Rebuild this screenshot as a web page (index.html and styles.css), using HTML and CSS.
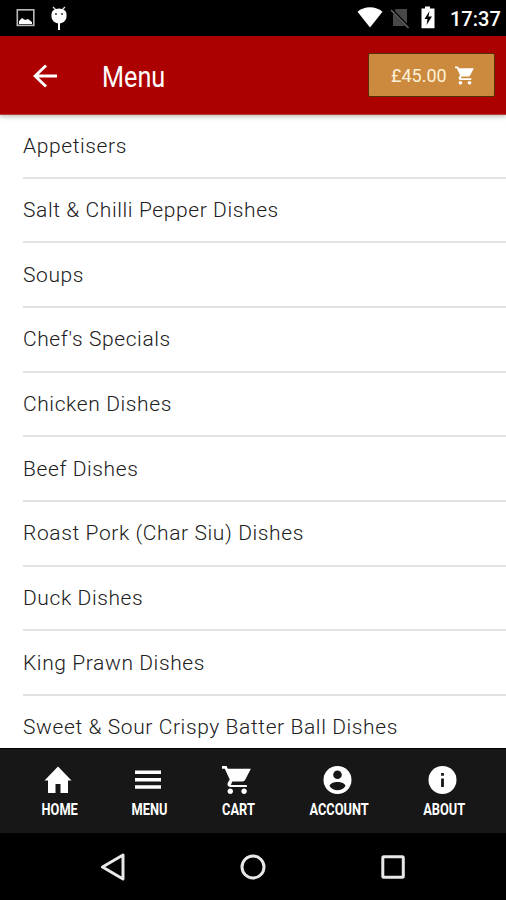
FILE: index.html
```html
<!DOCTYPE html>
<html lang="en">
<head>
<meta charset="utf-8">
<title>Menu</title>
<link rel="stylesheet" href="styles.css">
</head>
<body>
<div class="phone">
  <div class="status">
    <svg class="status-left" width="60" height="36" viewBox="0 0 60 36">
      <rect x="1.3" y="9.8" width="16.5" height="15.6" fill="none" stroke="#bbb" stroke-width="1.6"/>
      <path d="M3 24v-3l3-3 3 2 3-1 4 3v2z" fill="#fff"/>
      <path d="M37 7l3 3M49 7l-3 3" stroke="#ddd" stroke-width="1.4"/>
      <path d="M35.500 14a7.500 5.500 0 0 1 15 0v3a7.500 6.500 0 0 1-15 0z" fill="#fff"/>
      <path d="M43 22v8" stroke="#fff" stroke-width="2"/>
      <circle cx="40" cy="14" r="1.100" fill="#444"/><circle cx="46" cy="14" r="1.100" fill="#444"/>
    </svg>
    <svg class="status-right" width="84" height="36" viewBox="0 0 84 36">
      <path d="M0.500 11.800C7 5.700 19 5.700 25.500 11.800L13 27.400z" fill="#fff"/>
      <path d="M39 9h11v17H36V12z" fill="#484848"/>
      <path d="M34 9l18 19" stroke="#000" stroke-width="3"/>
      <path d="M34 10l17.500 18" stroke="#666" stroke-width="1.500"/>
      <path d="M64.500 8.500h3.500V6.500h5v2h4.500v19.800h-13z" fill="#fff"/>
      <path d="M72.500 11l-5 8h3l-1 6 5.500-8.500h-3.500z" fill="#000"/>
    </svg>
    <span class="clock">17:37</span>
  </div>
  <header class="appbar">
    <svg class="back" width="24" height="24" viewBox="0 0 24 24"><path d="M13 1.500L2 12l11 10.500M2.500 12H24" fill="none" stroke="#fff" stroke-width="2.900"/></svg>
    <h1 class="title"><span>Menu</span></h1>
    <div class="basket">
      <span class="price">£45.00</span>
      <svg width="19" height="19" viewBox="1 2 21 20"><path fill="#fff" d="M7 18c-1.100 0-2 .9-2 2s.9 2 2 2 2-.9 2-2-.9-2-2-2zM1 2v2h2l3.600 7.600-1.400 2.400C4.500 15.400 5.500 17 7 17h12v-2H7.400l1.100-2h7.500c.7 0 1.400-.4 1.700-1L21.900 4H5.200l-.9-2H1zm16 16c-1.100 0-2 .9-2 2s.9 2 2 2 2-.9 2-2-.9-2-2-2z"/></svg>
    </div>
  </header>
  <ul class="list">
    <li><span class="s1">Appetisers</span></li>
    <li><span class="s2">Salt &amp; Chilli Pepper Dishes</span></li>
    <li><span class="s3">Soups</span></li>
    <li><span class="s4">Chef's Specials</span></li>
    <li><span class="s5">Chicken Dishes</span></li>
    <li><span class="s6">Beef Dishes</span></li>
    <li><span class="s7">Roast Pork (Char Siu) Dishes</span></li>
    <li><span class="s8">Duck Dishes</span></li>
    <li><span class="s9">King Prawn Dishes</span></li>
    <li><span class="s10">Sweet &amp; Sour Crispy Batter Ball Dishes</span></li>
  </ul>
  <nav class="tabs">
    <div class="tab home"><svg width="28" height="28" viewBox="0 0 28 28"><path fill="#fff" d="M14 0.500L0.500 14.500H4V27h7.500v-9h5v9H24V14.500h3.500z"/></svg><span>HOME</span></div>
    <div class="tab menu"><svg width="28" height="28" viewBox="0 0 28 28"><path fill="#fff" d="M1 4.500h26v3.500H1zM1 12h26v3.500H1zM1 19.200h26v3.500H1z"/></svg><span>MENU</span></div>
    <div class="tab cart"><svg width="29" height="28" viewBox="1 2 21 20" preserveAspectRatio="none"><path fill="#fff" d="M7 18c-1.100 0-2 .9-2 2s.9 2 2 2 2-.9 2-2-.9-2-2-2zM1 2v2h2l3.600 7.600-1.400 2.400C4.500 15.400 5.500 17 7 17h12v-1.500H7.400l1.100-2.500h7.500c.7 0 1.400-.4 1.700-1L21.900 4H5.200l-.9-2H1zm16 16c-1.100 0-2 .9-2 2s.9 2 2 2 2-.9 2-2-.9-2-2-2z"/></svg><span>CART</span></div>
    <div class="tab account"><svg width="29" height="28" viewBox="0 0 29 28"><circle cx="14.500" cy="14" r="14" fill="#fff"/><circle cx="14.500" cy="8.800" r="4.300" fill="#161616"/><path d="M6.500 20c1.500-5.300 14.500-5.300 16 0-4 5.800-12 5.800-16 0z" fill="#161616"/></svg><span>ACCOUNT</span></div>
    <div class="tab about"><svg width="29" height="28" viewBox="0 0 29 28"><circle cx="14.500" cy="14" r="14" fill="#fff"/><path d="M13.100 7h2.800v2.800h-2.800zM13.100 12.500h2.800v8.500h-2.800z" fill="#161616"/></svg><span>ABOUT</span></div>
  </nav>
  <div class="sysnav">
    <svg width="26" height="28" viewBox="0 0 26 28"><path d="M2.500 14L23 2v24z" fill="none" stroke="#e8e8e8" stroke-width="3" stroke-linejoin="round"/></svg>
    <svg width="26" height="28" viewBox="0 0 26 28"><circle cx="13" cy="14" r="11" fill="none" stroke="#e8e8e8" stroke-width="3"/></svg>
    <svg width="26" height="28" viewBox="0 0 26 28"><rect x="2.800" y="3.800" width="20.500" height="20.500" rx="1" fill="none" stroke="#e8e8e8" stroke-width="3"/></svg>
  </div>
</div>
</body>
</html>
```
FILE: styles.css
```css
* { box-sizing: border-box; }
body { margin: 0; font-family: Roboto, "Open Sans", sans-serif; background: #000; }
svg { display: block; flex: none; }
span { white-space: nowrap; }
.phone { width: 506px; height: 900px; display: flex; flex-direction: column; overflow: hidden; }
.status { height: 36px; flex: none; background: #000; display: flex; align-items: center; padding: 0 11px 0 16px; }
.status-right { margin-left: auto; margin-right: 9px; margin-left: 281px; }
.clock { color: #fff; font-size: 20px; font-weight: 500; line-height: 36px; padding-top: 2px; }
.appbar { height: 79px; flex: none; background: #ad0000; display: flex; align-items: center; padding: 0 11px 0 33px; border-bottom: 1px solid #b83a36; z-index: 1; box-shadow: 0 2px 4px rgba(40, 50, 30, .28); }
.back { margin-top: 1px; }
.title { margin: 3px 0 0 45px; color: #fff; font-size: 29px; font-weight: 400; line-height: 40px; width: 70px; }
.title span { display: inline-block; transform: scaleX(.87); transform-origin: 0 50%; }
.basket { margin-left: auto; width: 127px; height: 44px; background: #cb8a3e; border: 1px solid #55300b; border-radius: 2px; display: flex; align-items: center; padding-left: 22px; }
.price { width: 64px; color: #fff1d8; font-size: 18px; }
.list { list-style: none; margin: 0; padding: 0 0 0 23px; height: 633px; flex: none; overflow: hidden; background: #fff; }
.list li { height: 64.7px; border-bottom: 2px solid #e2e2e2; display: flex; align-items: center; font-size: 21px; font-weight: 300; color: #202020; line-height: 30px; }
.list li:first-child { height: 63.500px; }
.list span { letter-spacing: .6px; }
.tabs { height: 85px; flex: none; background: #171717; border-top: 1px solid #000; display: flex; align-items: flex-start; padding: 17px 0 0 17px; }
.tab { display: flex; flex-direction: column; align-items: center; color: #fff; font-size: 16px; font-weight: 700; line-height: 20px; }
.tab span { margin-top: 6px; transform: scaleX(.8); }
.home { width: 85px; }
.menu { width: 95px; }
.cart { width: 82px; }
.account { width: 120px; }
.about { width: 90px; }
.home svg, .menu svg, .cart svg, .account svg, .about svg { margin-left: -4px; }
.sysnav { height: 67px; flex: none; background: #000; display: flex; align-items: center; justify-content: center; gap: 114px; }
```
